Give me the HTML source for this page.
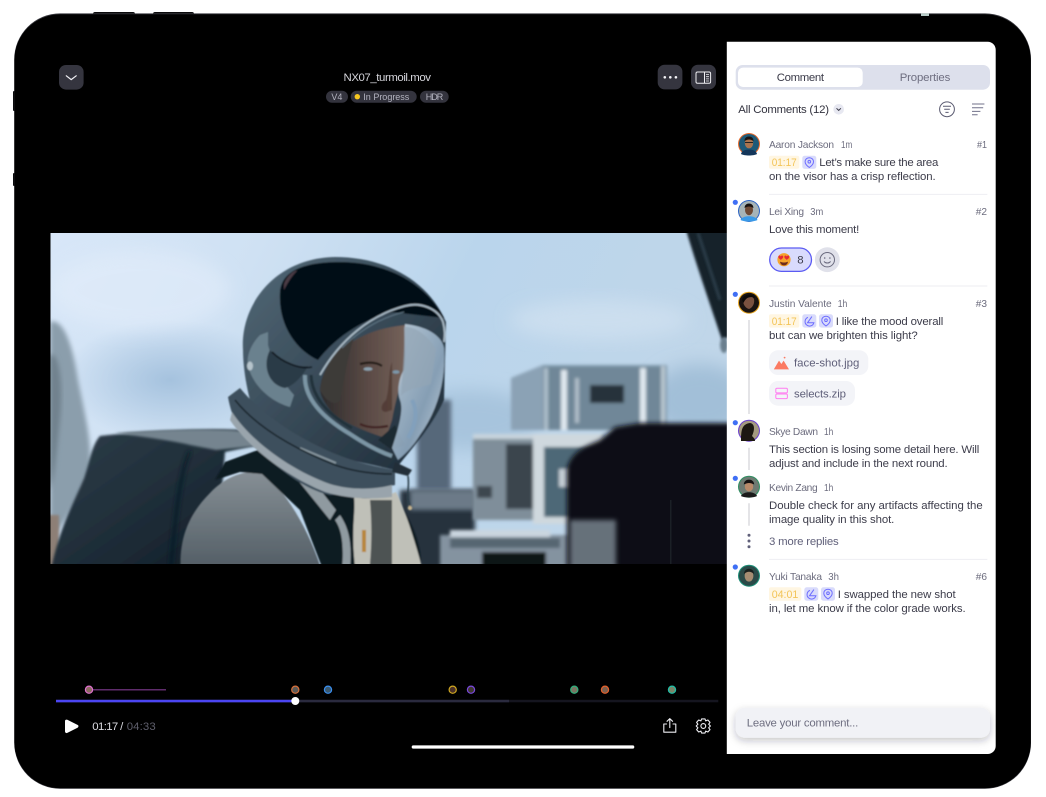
<!DOCTYPE html>
<html lang="en"><head><meta charset="utf-8"><title>NX07_turmoil.mov</title>
<style>
html,body{margin:0;padding:0;background:#fff;width:1046px;height:797px;overflow:hidden}
svg{display:block}
text{font-family:"Liberation Sans",sans-serif;font-size:11.4px;fill:#3a3a48}
.n{font-size:10.2px;fill:#6c6c7e}
.s{font-size:10.2px;fill:#6c6c7e}
.b{font-size:11.4px;fill:#3c3c4a}
.t{font-size:11.4px;fill:#f3c457}
.p{font-size:9px;fill:#b4b4c0}
.f{font-size:11.4px;fill:#60607a}
.ic{fill:none;stroke:#6d6dff;stroke-width:1}
</style></head><body>
<svg width="1046" height="797" viewBox="0 0 1046 797" xmlns="http://www.w3.org/2000/svg">
<defs>
<clipPath id="img"><rect x="50.5" y="233" width="677" height="331"/></clipPath>
<linearGradient id="sky" x1="0" y1="0" x2="1" y2="0.25"><stop offset="0" stop-color="#d8e7f8"/><stop offset=".3" stop-color="#cfe1f3"/><stop offset=".6" stop-color="#bad5ec"/><stop offset="1" stop-color="#c0d6e9"/></linearGradient>
<radialGradient id="cl" cx=".5" cy=".5" r=".5"><stop offset="0" stop-color="#a5c2de"/><stop offset="1" stop-color="#a5c2de" stop-opacity="0"/></radialGradient>
<linearGradient id="shell" x1="0" y1="0" x2="1" y2="1"><stop offset="0" stop-color="#526877"/><stop offset="1" stop-color="#1c2a36"/></linearGradient>
<linearGradient id="suit" x1="0" y1="0" x2="0" y2="1"><stop offset="0" stop-color="#868f95"/><stop offset="1" stop-color="#4f5a62"/></linearGradient>
<linearGradient id="pack" x1="0" y1="0" x2="1" y2="1"><stop offset="0" stop-color="#2e3e4a"/><stop offset=".6" stop-color="#1c2a35"/><stop offset="1" stop-color="#0c161f"/></linearGradient>
<linearGradient id="visor" x1="0" y1="0" x2="1" y2="1"><stop offset="0" stop-color="#d3e2ef" stop-opacity=".85"/><stop offset=".6" stop-color="#9db8d0" stop-opacity=".8"/><stop offset="1" stop-color="#e0e9f2" stop-opacity=".9"/></linearGradient>
<linearGradient id="face" x1="0" y1="0" x2="1" y2="0"><stop offset="0" stop-color="#2c2b2c"/><stop offset=".55" stop-color="#5a4a45"/><stop offset="1" stop-color="#75625a"/></linearGradient>
<filter id="b0" x="-10%" y="-10%" width="120%" height="120%"><feGaussianBlur stdDeviation=".8"/></filter>
<filter id="b1" x="-20%" y="-20%" width="140%" height="140%"><feGaussianBlur stdDeviation="1.2"/></filter>
<filter id="b15" x="-10%" y="-10%" width="120%" height="120%"><feGaussianBlur stdDeviation="1.7"/></filter>
<filter id="b2" x="-20%" y="-20%" width="140%" height="140%"><feGaussianBlur stdDeviation="2.5"/></filter>
<filter id="b8" x="-30%" y="-30%" width="160%" height="160%"><feGaussianBlur stdDeviation="9"/></filter>
<filter id="sh" x="-10%" y="-40%" width="120%" height="220%"><feDropShadow dx="0" dy="3" stdDeviation="4" flood-color="#20202c" flood-opacity=".25"/></filter>
<symbol id="pin" viewBox="0 0 14 14" overflow="visible"><path class="ic" d="M7 2.2c2.5 0 4.2 1.7 4.2 4 0 2.5-2.4 4.5-4.2 5.8-1.8-1.3-4.2-3.3-4.2-5.8 0-2.3 1.7-4 4.2-4z"/><circle class="ic" cx="7" cy="6.2" r="1.3"/></symbol>
<symbol id="rad" viewBox="0 0 14 14" overflow="visible"><path class="ic" d="M5.6 3.4A4.5 4.5 0 1 0 11.6 8.8H5.2L9.6 2.6"/></symbol>
</defs>

<!-- device -->
<rect x="93" y="12" width="42" height="4" rx="2" fill="#0b0b0d"/>
<rect x="153" y="12" width="41" height="4" rx="2" fill="#0b0b0d"/>
<rect x="13" y="91" width="3" height="20" rx="1" fill="#0b0b0d"/>
<rect x="13" y="173" width="3" height="13" rx="1" fill="#0b0b0d"/>
<rect x="14.2" y="13.4" width="1016.8" height="775.4" rx="46" fill="#3a3a40"/>
<rect x="14.4" y="14.2" width="1016.4" height="774" rx="46" fill="#000"/>
<rect x="921" y="13.4" width="8" height="2.6" fill="#b8ccc8"/>

<!-- video still -->
<g clip-path="url(#img)">
<rect x="50" y="233" width="680" height="332" fill="url(#sky)"/>
<ellipse cx="170" cy="380" rx="110" ry="60" fill="url(#cl)"/>
<ellipse cx="140" cy="290" rx="90" ry="40" fill="#e4eefb" opacity=".55" filter="url(#b8)"/>
<ellipse cx="470" cy="420" rx="70" ry="30" fill="#a7c4dd" filter="url(#b8)"/>
<ellipse cx="600" cy="320" rx="90" ry="20" fill="#d2e2f1" opacity=".7" filter="url(#b8)"/>
<ellipse cx="700" cy="400" rx="50" ry="36" fill="#a2bfd8" filter="url(#b8)"/>

<!-- left blurred figure -->
<path d="M50 322C62 318 72 340 78 380 84 410 92 440 90 465 84 490 70 515 58 530L50 540Z" fill="#8b9eac" filter="url(#b2)"/>
<path d="M50 355C58 350 64 380 60 420 56 460 54 480 50 490Z" fill="#71828e" filter="url(#b2)"/>
<rect x="46" y="515" width="13" height="60" fill="#8d7f76" filter="url(#b1)"/>

<!-- background structures -->
<rect x="417" y="400" width="34" height="90" fill="#56687a" filter="url(#b2)"/>
<rect x="400" y="490" width="75" height="90" fill="#25323c" filter="url(#b2)"/>
<rect x="410" y="490" width="65" height="20" fill="#6c7a88" filter="url(#b2)"/>
<g filter="url(#b15)">
<path d="M511 378L543 365H667V430H511Z" fill="#7f99ab"/>
<path d="M511 378L543 365V430H511Z" fill="#8ba2b5"/>
<rect x="543" y="367" width="122" height="63" fill="#6f8798"/>
<rect x="544" y="368" width="4" height="62" fill="#aebfcc"/>
<rect x="561" y="370" width="6" height="60" fill="#dfe8ef"/>
<rect x="575" y="378" width="4" height="45" fill="#b0bec9"/>
<rect x="640" y="368" width="6" height="62" fill="#dfe8ef"/>
<rect x="661" y="366" width="4" height="64" fill="#bac7d1"/>
<rect x="590" y="385" width="34" height="18" fill="#28303a"/>
<path d="M473 434H604V520H473Z" fill="#7f8e9a"/>
<rect x="473" y="434" width="130" height="5" fill="#c8d4dd"/>
<rect x="506" y="444" width="27" height="65" fill="#3a454e"/>
<rect x="533" y="434" width="70" height="90" fill="#cfd8de"/>
<rect x="544" y="447" width="50" height="70" fill="#4e6877"/>
<rect x="559" y="469" width="22" height="18" fill="#c4ced5"/>
<rect x="477" y="486" width="15" height="12" fill="#3c464f"/>
<path d="M440 535H570V575H440Z" fill="#8493a0"/>
<rect x="450" y="530" width="100" height="7" fill="#cbd6df"/>
<rect x="482" y="552" width="64" height="20" fill="#0f1216"/>
<rect x="450" y="538" width="110" height="10" fill="#566672"/>
</g>
<!-- foreground dark block -->
<path d="M567 470C570 450 590 445 600 440L615 427 640 423H735V575H567Z" fill="#0b0e12" filter="url(#b2)"/>
<rect x="570" y="520" width="46" height="55" fill="#66717a" filter="url(#b2)"/>
<rect x="670" y="500" width="1.5" height="65" fill="#1b2026"/>
<!-- top-right strut -->
<path d="M686 230H735V335L722 340C712 310 698 270 686 230Z" fill="#16222c" filter="url(#b1)"/>
<path d="M698 233L720 300" stroke="#2a3c48" stroke-width="3" filter="url(#b1)"/>
<ellipse cx="724" cy="345" rx="4" ry="8" fill="#6a7f8e" filter="url(#b1)"/>

<!-- backpack -->
<path d="M100 436C130 432 210 428 240 430 250 434 256 440 258 445L225 452 215 575H50C58 530 75 500 84 478 90 460 92 445 100 436Z" fill="url(#pack)" filter="url(#b1)"/>
<path d="M115 433C150 430 215 428 240 431 250 436 254 441 257 446L216 450 190 445C170 440 135 436 115 433Z" fill="#74848f" filter="url(#b1)"/>
<path d="M190 451C180 470 175 520 170 575" stroke="#111c25" stroke-width="3" fill="none" filter="url(#b2)"/>

<g filter="url(#b0)">
<!-- suit -->
<path d="M181 575C178 540 188 515 210 493 226 476 245 470 262 472 285 490 310 530 323 575Z" fill="url(#suit)"/>
<path d="M258 450L225 462 215 480 240 472 262 474 300 510 325 575H420C425 545 410 520 395 495L300 478Z" fill="#101a21"/>
<path d="M292 473L305 470 336 510 330 520Z" fill="#8f9aa0"/>
<path d="M340 515C350 530 352 545 350 570L342 570C344 545 342 530 335 520Z" fill="#8f9aa0"/>
<path d="M354 497C366 500 385 497 396 492 405 510 415 540 424 575H356C350 530 356 515 354 497Z" fill="#bfc0b8"/>
<rect x="362" y="530" width="4" height="22" fill="#b8873c"/>
<path d="M370 500C372 525 372 545 369 575H392V500Z" fill="#1c2328" opacity=".7"/>

<!-- helmet shell -->
<path d="M243 350C240 305 275 258 335 257 385 257 428 280 446 322L444 400C430 430 410 450 395 470L260 440 250 400C246 385 243 365 243 350Z" fill="url(#shell)"/>
<path d="M280 292C282 270 305 262 340 262 385 262 425 282 444 318L392 312C355 322 332 342 318 360 296 350 278 325 280 292Z" fill="#060b12"/>
<path d="M284 284C288 272 300 268 296 272 292 276 288 282 284 290Z" fill="#4a3a44"/>
<path d="M260 335C250 345 244 360 250 372 256 388 272 402 290 407L294 395C280 380 272 360 268 345L268 332Z" fill="#6b818e"/>
<ellipse cx="250" cy="366" rx="3" ry="4.5" fill="#b6c4cc"/>
<path d="M270 350C262 365 268 385 285 388 296 385 305 372 308 366 298 368 280 362 270 350Z" fill="#2c3b46"/>
<path d="M272 352C282 362 300 370 312 367" stroke="#0c141b" stroke-width="1.6" fill="none"/>

<!-- neck ring -->
<path d="M228 397L240 388C258 410 285 430 320 447 350 462 375 466 395 470V485C370 490 340 495 330 495 305 490 280 470 255 447 240 430 232 420 228 397Z" fill="#3e505d"/>
<path d="M232 412C250 440 290 470 330 484 350 490 372 490 392 485V497C368 500 345 498 325 492 290 478 250 450 230 420Z" fill="#99a4ac"/>
<path d="M300 448L336 463" stroke="#87969f" stroke-width="2"/>
<path d="M235 400C255 425 290 447 335 465 355 472 375 474 392 474" stroke="#18242c" stroke-width="1.6" fill="none"/>
<!-- seal rim -->
<path d="M305 375C304 395 318 415 350 434 365 444 380 452 392 456" stroke="#7c95a4" stroke-width="4" fill="none"/>
<path d="M311 375C312 395 324 412 352 428" stroke="#20303a" stroke-width="3" fill="none"/>

<!-- face -->
<path d="M320 390C322 362 350 330 406 325L404 372C398 392 395 404 392 420L386 438C366 432 342 422 332 412 326 405 321 398 320 390Z" fill="url(#face)"/>
<path d="M320 390C324 362 340 345 354 338 348 355 345 375 340 400 334 408 324 398 320 390Z" fill="#3c3a39"/>
<path d="M360 364C368 362 376 362 382 366" stroke="#241a18" stroke-width="2.2" fill="none"/>
<ellipse cx="368" cy="369" rx="4.5" ry="1.8" fill="#8ba0ae"/>
<path d="M392 362C388 372 390 386 386 400 380 405 380 412 386 412L392 410Z" fill="#4b352f" opacity=".7"/>
<path d="M360 424C368 428 378 428 388 426" stroke="#3f2422" stroke-width="2.2" fill="none"/>
<ellipse cx="396" cy="372" rx="3.5" ry="1.8" fill="#7c96a8"/>
<path d="M378 440L395 425 405 445 392 450Z" fill="#1e2931"/>

<!-- visor glass -->
<path d="M405 324C425 326 442 335 444 348 446 380 438 410 420 435 412 448 404 455 398 460L392 448C398 430 404 410 400 400 396 390 400 375 404 370 406 350 404 335 405 324Z" fill="url(#visor)"/>
<path d="M404 327C416 325 432 340 436 350L431 384C420 388 408 388 401 396 402 380 405 350 404 327Z" fill="#93a5b5" opacity=".7"/>
<path d="M412 400C418 410 416 425 408 438" stroke="#82a0bc" stroke-width="4" fill="none"/>
<path d="M320 375C340 340 370 315 405 306 420 302 438 308 443 322 445 330 445 335 444 342" stroke="#a9bac6" stroke-width="1.8" fill="none"/>
<path d="M342 348C360 330 380 318 404 312" stroke="#5f7584" stroke-width="1" fill="none"/>
<path d="M395 462L412 470 408 476 392 472Z" fill="#232f38"/>
<path d="M408 476C410 490 405 495 410 506" stroke="#2a3d4a" stroke-width="1.6" fill="none"/>
<circle cx="410" cy="508" r="2.2" fill="#c5b28d"/>
</g>
</g>

<!-- top bar -->
<rect x="59" y="65" width="24.6" height="24.6" rx="7" fill="#35353f"/>
<path d="M66.3 75.8L71.2 79.6 76.2 75.8" fill="none" stroke="#f2f2f6" stroke-width="1.2" stroke-linecap="round" stroke-linejoin="round"/>
<text x="343.5" y="81" textLength="87.5" style="fill:#d6d6dc">NX07_turmoil.mov</text>
<rect x="326" y="90.7" width="22" height="12" rx="6" fill="#33333d"/>
<rect x="350.7" y="90.7" width="66" height="12" rx="6" fill="#33333d"/>
<rect x="420" y="90.7" width="28.7" height="12" rx="6" fill="#33333d"/>
<text class="p" x="331.4" y="99.9" textLength="11">V4</text>
<circle cx="357.3" cy="96.7" r="2.7" fill="#f6c71f"/>
<text class="p" x="363.3" y="99.9" textLength="46">In Progress</text>
<text class="p" x="425.7" y="99.9" textLength="17.6">HDR</text>
<rect x="657.7" y="64.7" width="24.7" height="24.7" rx="7" fill="#35353f"/>
<circle cx="664.8" cy="77.3" r="1.3" fill="#f5f5f8"/><circle cx="670.3" cy="77.3" r="1.3" fill="#f5f5f8"/><circle cx="675.9" cy="77.3" r="1.3" fill="#f5f5f8"/>
<rect x="691" y="64.7" width="25" height="24.7" rx="7" fill="#35353f"/>
<rect x="696" y="72" width="14.6" height="11.3" rx="1.5" fill="none" stroke="#eeeef2" stroke-width="1"/>
<path d="M704.5 72V83.3" stroke="#eeeef2" stroke-width="1"/>
<path d="M706 74.5h3M706 76.7h3M706 78.9h3M706 81h3" stroke="#eeeef2" stroke-width=".8"/>

<!-- side panel -->
<path d="M726.8 41.8H987.7a8 8 0 0 1 8 8V746a8 8 0 0 1-8 8H726.8Z" fill="#fff"/>
<rect x="735.7" y="65" width="254.3" height="24.7" rx="7" fill="#dde0ec"/>
<rect x="738" y="67.6" width="124.7" height="19.4" rx="5" fill="#fff"/>
<text x="776.7" y="81" textLength="47.3" style="fill:#3a3a48">Comment</text>
<text x="899.7" y="81" textLength="50.6" style="fill:#6e6e80">Properties</text>
<text x="738.3" y="113" textLength="90.7" style="fill:#33333f">All Comments (12)</text>
<circle cx="838.7" cy="109.3" r="5.3" fill="#e7e8f1"/>
<path d="M836.5 108.3L838.7 110.4 840.9 108.3" fill="none" stroke="#3a3a48" stroke-width="1"/>
<circle cx="947" cy="109.3" r="7.4" fill="none" stroke="#5a5a70" stroke-width="1"/>
<path d="M943 106.2h8M944.2 109.3h5.6M945.4 112.4h3.2" stroke="#5a5a70" stroke-width="1"/>
<path d="M972 104h12.4M972 107.8h11.2M972 111.4h8.4M972 114.8h5.6" stroke="#71718a" stroke-width="1"/>

<!-- comment 1 -->
<circle cx="749" cy="144" r="11" fill="#e8692a"/><circle cx="749" cy="144" r="10" fill="#1e5a78"/>
<path d="M741 154C742 148 756 148 757 154 754 156 744 156 741 154Z" fill="#14365a"/><ellipse cx="749" cy="143" rx="4.2" ry="5.4" fill="#a9744f"/><path d="M744.6 141C744 135 754 135 753.4 141 750 139 748 139 744.6 141Z" fill="#1a1412"/><path d="M745 142.5h8" stroke="#222" stroke-width="1"/>
<text class="n" x="769" y="148" textLength="65">Aaron Jackson</text><text class="s" x="841" y="148" textLength="11.3" lengthAdjust="spacingAndGlyphs">1m</text><text class="n" x="977" y="148" textLength="10" lengthAdjust="spacingAndGlyphs">#1</text>
<rect x="769" y="155.7" width="30.3" height="13" rx="2" fill="#fff6e2"/><text class="t" x="771.7" y="166" textLength="25" lengthAdjust="spacingAndGlyphs">01:17</text>
<rect x="802.3" y="155.7" width="14" height="13.2" rx="2.5" fill="#d9dbfb"/><use href="#pin" x="802.3" y="155.5" width="14" height="14"/>
<text class="b" x="819.3" y="166" textLength="119">Let’s make sure the area</text>
<text class="b" x="769" y="180" textLength="166.7">on the visor has a crisp reflection.</text>
<path d="M769 194.4H987.3" stroke="#eeeef2" stroke-width="1"/>

<!-- comment 2 -->
<circle cx="735.3" cy="202.3" r="2.6" fill="#3f6ff5"/>
<circle cx="749" cy="211" r="11" fill="#2a62c4"/><circle cx="749" cy="211" r="10" fill="#a6b4b8"/>
<path d="M740.5 220C742 215 756 215 757.5 220 754 222 744 222 740.5 220Z" fill="#3a9ae8"/><ellipse cx="749" cy="210" rx="4" ry="5.2" fill="#6e4a36"/><path d="M744.6 208C744.5 202 753.5 202 753.4 208 750 206 748 206 744.6 208Z" fill="#181210"/>
<text class="n" x="769" y="215" textLength="35">Lei Xing</text><text class="s" x="810.3" y="215" textLength="13" lengthAdjust="spacingAndGlyphs">3m</text><text class="n" x="975.7" y="215" textLength="11.3" lengthAdjust="spacingAndGlyphs">#2</text>
<text class="b" x="769" y="233" textLength="90.3">Love this moment!</text>
<rect x="769.7" y="248" width="41.8" height="23.4" rx="11.7" fill="#d9dbfd" stroke="#5b5bf2" stroke-width="1.3"/>
<circle cx="784" cy="259.7" r="6.6" fill="#f5a42c"/>
<path d="M779 258.4c-1.4-1.6-.3-3.2.9-2.8.5.1.7.5.9.9.2-.4.4-.8.9-.9 1.2-.4 2.3 1.2.9 2.8l-1.8 1.5zM785 258.4c-1.4-1.6-.3-3.2.9-2.8.5.1.7.5.9.9.2-.4.4-.8.9-.9 1.2-.4 2.3 1.2.9 2.8l-1.8 1.5z" fill="#e52a35"/>
<path d="M780 261.6c2 1.2 6 1.2 8 0-.4 2.6-2 3.8-4 3.8s-3.6-1.2-4-3.8z" fill="#6e2c1c"/>
<text x="797.3" y="263.6" textLength="5.6" style="fill:#3c3c4a">8</text>
<circle cx="827.3" cy="259.7" r="12.4" fill="#e0e1ea"/>
<circle cx="827.3" cy="259.7" r="7.2" fill="none" stroke="#6a6a7e" stroke-width="1"/>
<circle cx="824.7" cy="258" r=".8" fill="#6a6a7e"/><circle cx="829.9" cy="258" r=".8" fill="#6a6a7e"/>
<path d="M824 261.4c1.6 2.2 5 2.2 6.6 0" fill="none" stroke="#6a6a7e" stroke-width="1"/>
<path d="M769 286H987.3" stroke="#eeeef2" stroke-width="1"/>

<!-- comment 3 -->
<circle cx="735.3" cy="294.3" r="2.6" fill="#3f6ff5"/>
<circle cx="749" cy="302.7" r="11" fill="#e6a520"/><circle cx="749" cy="302.7" r="10" fill="#1a1412"/>
<path d="M743 300C744 295 752 295 754 299 755 304 752 308 749 309 745 308 743 304 743 300Z" fill="#7a5240"/><path d="M742 300C743 293 755 293 755.5 298 750 296 746 297 743.5 303Z" fill="#0c0908"/>
<text class="n" x="769" y="307" textLength="62.7">Justin Valente</text><text class="s" x="837.7" y="307" textLength="9.6" lengthAdjust="spacingAndGlyphs">1h</text><text class="n" x="975.7" y="307" textLength="11.3" lengthAdjust="spacingAndGlyphs">#3</text>
<path d="M749 320V414" stroke="#c9c9cf" stroke-width="1"/>
<rect x="769" y="314.3" width="30.3" height="13.3" rx="2" fill="#fff6e2"/><text class="t" x="771.7" y="325" textLength="25" lengthAdjust="spacingAndGlyphs">01:17</text>
<rect x="802.3" y="314.3" width="14" height="13.3" rx="2.5" fill="#d9dbfb"/><use href="#rad" x="802.3" y="314" width="14" height="14"/>
<rect x="819" y="314.3" width="14" height="13.3" rx="2.5" fill="#d9dbfb"/><use href="#pin" x="819" y="314" width="14" height="14"/>
<text class="b" x="835.7" y="325" textLength="107.6">I like the mood overall</text>
<text class="b" x="769" y="339" textLength="148.7">but can we brighten this light?</text>
<rect x="769" y="350.3" width="99.3" height="24.7" rx="9" fill="#f3f4f8"/>
<path d="M773.8 369.4L779 360.6 781.4 364 783.6 360.6 789 369.4Z" fill="#fb7a62"/><circle cx="784.6" cy="357.6" r=".9" fill="#fb7a62"/>
<text class="f" x="794" y="366.6" textLength="65.3">face-shot.jpg</text>
<rect x="769" y="381" width="86" height="24.7" rx="9" fill="#f3f4f8"/>
<rect x="775.8" y="388.3" width="11.6" height="4.6" rx="1.2" fill="none" stroke="#ff7df0" stroke-width="1"/>
<rect x="775.8" y="394" width="11.6" height="4.6" rx="1.2" fill="none" stroke="#ff7df0" stroke-width="1"/>
<text class="f" x="794" y="397.6" textLength="52">selects.zip</text>

<!-- Skye -->
<circle cx="735.3" cy="422.7" r="2.6" fill="#3f6ff5"/>
<circle cx="749" cy="430.7" r="11" fill="#6a3fd0"/><circle cx="749" cy="430.7" r="10" fill="#a49a80"/>
<path d="M741 441C741 430 742 424 750 423 756 424 754 432 752 436 754 438 755 439 755 441Z" fill="#1c1712"/>
<text class="n" x="769" y="435" textLength="49">Skye Dawn</text><text class="s" x="824" y="435" textLength="9.3" lengthAdjust="spacingAndGlyphs">1h</text>
<path d="M749 447.7V470" stroke="#c9c9cf" stroke-width="1"/>
<text class="b" x="769" y="453" textLength="210.3">This section is losing some detail here. Will</text>
<text class="b" x="769" y="467" textLength="178.7">adjust and include in the next round.</text>

<!-- Kevin -->
<circle cx="735.3" cy="478.3" r="2.6" fill="#3f6ff5"/>
<circle cx="749" cy="486.7" r="11" fill="#2f8f62"/><circle cx="749" cy="486.7" r="10" fill="#6e7a72"/>
<path d="M741 496C743 491 755 491 757 496 754 498 744 498 741 496Z" fill="#1a1a1a"/><ellipse cx="749" cy="486.5" rx="4.2" ry="5" fill="#b98a6a"/><path d="M743.8 484.5C744 478 754 478 754.2 484.5 750 482.5 748 482.5 743.8 484.5Z" fill="#151212"/>
<text class="n" x="769" y="491" textLength="48.7">Kevin Zang</text><text class="s" x="824" y="491" textLength="9.3" lengthAdjust="spacingAndGlyphs">1h</text>
<path d="M749 503.3V525.7" stroke="#c9c9cf" stroke-width="1"/>
<text class="b" x="769" y="509" textLength="213.7">Double check for any artifacts affecting the</text>
<text class="b" x="769" y="523" textLength="125.3">image quality in this shot.</text>
<circle cx="749" cy="535.3" r="1.5" fill="#60607a"/><circle cx="749" cy="541" r="1.5" fill="#60607a"/><circle cx="749" cy="546.7" r="1.5" fill="#60607a"/>
<text class="f" x="769" y="545" textLength="69.7">3 more replies</text>
<path d="M769 559.4H987.3" stroke="#eeeef2" stroke-width="1"/>

<!-- Yuki -->
<circle cx="735.3" cy="567" r="2.6" fill="#3f6ff5"/>
<circle cx="749" cy="575.7" r="11" fill="#1d8f78"/><circle cx="749" cy="575.7" r="10" fill="#2a4a48"/>
<ellipse cx="749" cy="576" rx="4.4" ry="5.6" fill="#a58c72"/><path d="M744 574C744 567 754 567 754 574 751 571 747 571 744 574Z" fill="#18201e"/>
<text class="n" x="769" y="580" textLength="53">Yuki Tanaka</text><text class="s" x="828.3" y="580" textLength="10.7" lengthAdjust="spacingAndGlyphs">3h</text><text class="n" x="975.7" y="580" textLength="11.3" lengthAdjust="spacingAndGlyphs">#6</text>
<rect x="769" y="587.3" width="32.3" height="13.4" rx="2" fill="#fff6e2"/><text class="t" x="771.7" y="598" textLength="26.6" lengthAdjust="spacingAndGlyphs">04:01</text>
<rect x="804.3" y="587.3" width="14" height="13.4" rx="2.5" fill="#d9dbfb"/><use href="#rad" x="804.3" y="587" width="14" height="14"/>
<rect x="821" y="587.3" width="14" height="13.4" rx="2.5" fill="#d9dbfb"/><use href="#pin" x="821" y="587" width="14" height="14"/>
<text class="b" x="837.7" y="598" textLength="118">I swapped the new shot</text>
<text class="b" x="769" y="612" textLength="196.7">in, let me know if the color grade works.</text>

<!-- input -->
<rect x="735.7" y="707.7" width="254.3" height="30" rx="9" fill="#f1f2f6" filter="url(#sh)"/>
<text x="746.7" y="726.6" textLength="111.6" style="fill:#6e6e80">Leave your comment...</text>

<!-- timeline -->
<path d="M89 689.7H166" stroke="#5f2c6c" stroke-width="1.5"/>
<rect x="56" y="699.8" width="662.3" height="2.5" fill="#15151f"/>
<rect x="56" y="699.8" width="453" height="2.5" fill="#2a2a3e"/>
<rect x="56" y="699.8" width="239.3" height="2.5" fill="#4b45f2"/>
<circle cx="295.3" cy="701" r="4" fill="#fff"/>
<g stroke-width="1.2">
<circle cx="89" cy="689.7" r="3.6" fill="#8a6a60" stroke="#e070d0"/>
<circle cx="295.3" cy="689.7" r="3.6" fill="#5a5a58" stroke="#d8703a"/>
<circle cx="328" cy="689.7" r="3.6" fill="#3c5a70" stroke="#3a8ff0"/>
<circle cx="452.7" cy="689.7" r="3.6" fill="#4a3028" stroke="#d0a820"/>
<circle cx="471" cy="689.7" r="3.6" fill="#403a30" stroke="#7a48e0"/>
<circle cx="574.3" cy="689.7" r="3.6" fill="#7a7462" stroke="#2fb07c"/>
<circle cx="605" cy="689.7" r="3.6" fill="#7a6050" stroke="#e8602a"/>
<circle cx="672" cy="689.7" r="3.6" fill="#7a8468" stroke="#1dc0a8"/>
</g>
<path d="M66.6 721.2L76.8 726.3 66.6 731.4Z" fill="#fff" stroke="#fff" stroke-width="3.2" stroke-linejoin="round"/>
<text x="92.3" y="730" textLength="31" style="fill:#dcdce2">01:17 /</text>
<text x="126.7" y="730" textLength="29" style="fill:#5f5f6c">04:33</text>
<path d="M666.6 724H663.8V732.2H675.8V724H673M669.8 727.6V718.8M667 721.3L669.8 718.6 672.6 721.3" fill="none" stroke="#eeeef2" stroke-width="1.1" stroke-linejoin="round" stroke-linecap="round"/>
<path d="M701.6 718.9H705L705.7 720.9 707.9 720 710 722.4 708.7 724.2 710.4 726 708.7 727.8 710 729.6 707.9 732 705.7 731.1 705 733.1H701.6L700.9 731.1 698.7 732 696.6 729.6 697.9 727.8 696.2 726 697.9 724.2 696.6 722.4 698.7 720 700.9 720.9Z" fill="none" stroke="#eeeef2" stroke-width="1.1" stroke-linejoin="round"/>
<circle cx="703.3" cy="726" r="2.4" fill="none" stroke="#eeeef2" stroke-width="1.1"/>
<rect x="411.7" y="745.4" width="222.6" height="3.2" rx="1.6" fill="#fff"/>
</svg>
</body></html>
